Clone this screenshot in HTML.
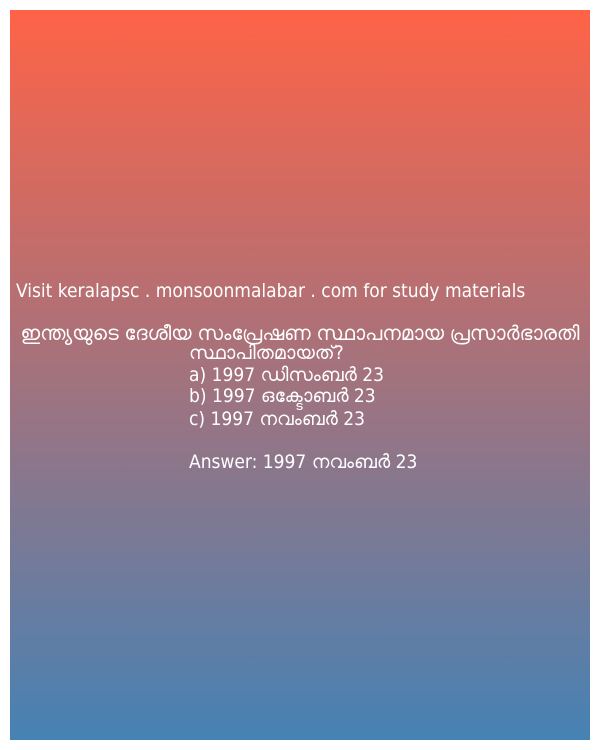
<!DOCTYPE html>
<html><head><meta charset="utf-8"><style>
html,body{margin:0;padding:0;width:600px;height:750px;background:#fff;overflow:hidden}
.box{position:absolute;left:10px;top:10px;width:580px;height:730px;background:linear-gradient(to bottom,#ff6347,#4682b4)}
.t{position:absolute;color:#fff;font-family:"DejaVu Sans Condensed","Liberation Sans",sans-serif;font-size:19px;white-space:nowrap;line-height:22px}
</style></head><body>
<div class="box"></div>
<div class="t" style="left:16px;top:280px">Visit keralapsc . monsoonmalabar . com for study materials</div>
<div class="t" style="left:0px;top:322px;width:600px;text-align:center;font-size:20px">ഇന്ത്യയുടെ ദേശീയ സംപ്രേഷണ സ്ഥാപനമായ പ്രസാർഭാരതി</div>
<div class="t" style="left:189px;top:342px">സ്ഥാപിതമായത്?</div>
<div class="t" style="left:189px;top:364px">a) 1997 ഡിസംബർ 23</div>
<div class="t" style="left:189px;top:385px">b) 1997 ഒക്ടോബർ 23</div>
<div class="t" style="left:189px;top:408px">c) 1997 നവംബർ 23</div>
<div class="t" style="left:189px;top:451px">Answer: 1997 നവംബർ 23</div>
</body></html>
